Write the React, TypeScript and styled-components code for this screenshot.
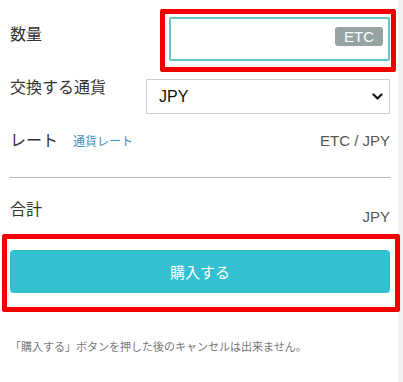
import React from "react";
import styled, { createGlobalStyle } from "styled-components";

const Global = createGlobalStyle`
  html, body { margin: 0; padding: 0; background: #f1f1f1; }
  body { font-family: "Noto Sans CJK JP", "Liberation Sans", sans-serif; }
  * { box-sizing: border-box; }
`;

const Panel = styled.div`
  width: 398px;
  height: 382px;
  background: #ffffff;
  padding: 17px 8px 0 10px;
  display: flex;
  flex-direction: column;
`;

const Row = styled.div<{ $mt?: number }>`
  display: flex;
  align-items: flex-start;
  justify-content: space-between;
  margin-top: ${(p) => p.$mt ?? 0}px;
`;

const Label = styled.div<{ $pt?: number }>`
  font-size: 16px;
  line-height: 24px;
  color: #333333;
  padding-top: ${(p) => p.$pt ?? 0}px;
  margin-top: -2px;
  display: flex;
  align-items: baseline;
`;

const SubLink = styled.a`
  font-size: 12px;
  color: #3f8fc0;
  margin-left: 15px;
  text-decoration: none;
`;

const Annotated = styled.div`
  position: relative;
`;

const RedFrame = styled.span<{ $t: number; $r: number; $b: number; $l: number }>`
  position: absolute;
  top: -${(p) => p.$t}px;
  right: -${(p) => p.$r}px;
  bottom: -${(p) => p.$b}px;
  left: -${(p) => p.$l}px;
  border: 5px solid #f20000;
  border-radius: 2px;
  pointer-events: none;
`;

const AmountInput = styled.div`
  width: 221px;
  height: 44px;
  border: 2px solid #67c4c6;
  border-radius: 2px;
  background: #fff;
  position: relative;
`;

const Unit = styled.span`
  position: absolute;
  right: 5px;
  top: 8px;
  width: 48px;
  height: 19px;
  border-radius: 3px;
  background: #96a3a3;
  color: #ffffff;
  font-family: "Liberation Sans", Arial, sans-serif;
  font-size: 15px;
  line-height: 19px;
  text-align: center;
`;

const SelectWrap = styled.div`
  position: relative;
  width: 244px;
  height: 35px;
  margin-top: 3px;
`;

const Select = styled.select`
  appearance: none;
  -webkit-appearance: none;
  width: 100%;
  height: 100%;
  border: 1px solid #cfcfcf;
  border-radius: 0;
  background: #fff;
  padding: 0 0 0 12px;
  font-family: "Liberation Sans", Arial, sans-serif;
  font-size: 16px;
  color: #111;
`;

const Chevron = styled.svg`
  position: absolute;
  right: 7px;
  top: 14px;
  pointer-events: none;
`;

const Value = styled.div<{ $mt?: number }>`
  font-family: "Liberation Sans", Arial, sans-serif;
  font-size: 15px;
  line-height: 24px;
  color: #555555;
  margin-top: ${(p) => p.$mt ?? 0}px;
`;

const Divider = styled.hr`
  margin: 24px 0 0 0;
  border: none;
  border-top: 1px solid #b4b4b4;
  width: 380px;
`;

const ButtonArea = styled.div`
  margin-top: 21px;
`;

const BuyButton = styled.button`
  width: 380px;
  height: 43px;
  border: none;
  border-radius: 4px;
  background: #33c1d1;
  color: #ffffff;
  font-family: "Noto Sans CJK JP", sans-serif;
  font-size: 15px;
  display: flex;
  align-items: center;
  justify-content: center;
`;

const Note = styled.p`
  margin: 45px 0 0 0;
  font-size: 11px;
  line-height: 16px;
  color: #777777;
`;

export default function App() {
  return (
    <>
      <Global />
      <Panel>
        <Row>
          <Label $pt={6}>数量</Label>
          <Annotated>
            <AmountInput>
              <Unit>ETC</Unit>
            </AmountInput>
            <RedFrame $t={8} $r={6} $b={11} $l={9} />
          </Annotated>
        </Row>
        <Row $mt={15}>
          <Label>交換する通貨</Label>
          <SelectWrap>
            <Select defaultValue="JPY">
              <option value="JPY">JPY</option>
            </Select>
            <Chevron width="11" height="8" viewBox="0 0 11 8">
              <path d="M1.5 1.5 L5.5 5.5 L9.5 1.5" fill="none" stroke="#111" strokeWidth="2.2" strokeLinecap="round" strokeLinejoin="round" />
            </Chevron>
          </SelectWrap>
        </Row>
        <Row $mt={15}>
          <Label>
            レート<SubLink>通貨レート</SubLink>
          </Label>
          <Value>ETC / JPY</Value>
        </Row>
        <Divider />
        <Row $mt={20}>
          <Label>合計</Label>
          <Value $mt={7}>JPY</Value>
        </Row>
        <ButtonArea>
          <Annotated>
            <BuyButton>購入する</BuyButton>
            <RedFrame $t={16} $r={10} $b={19} $l={8} />
          </Annotated>
        </ButtonArea>
        <Note>「購入する」ボタンを押した後のキャンセルは出来ません。</Note>
      </Panel>
    </>
  );
}
